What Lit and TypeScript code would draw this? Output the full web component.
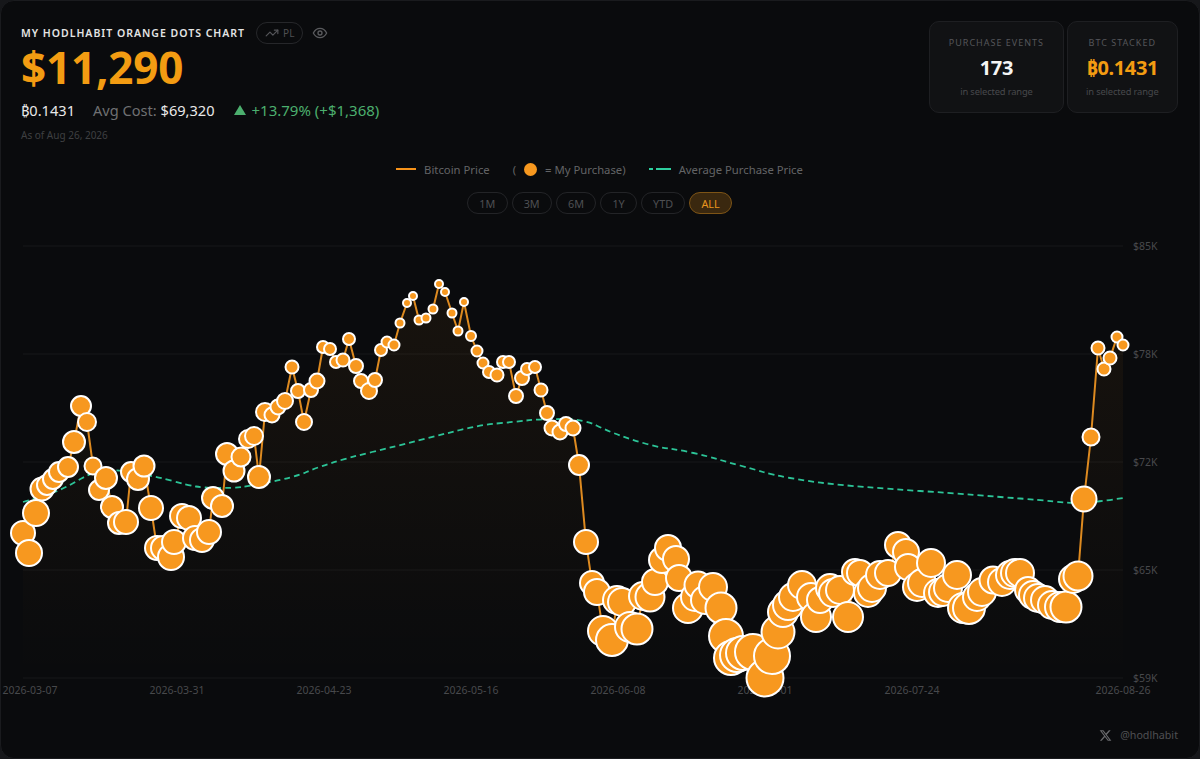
import { LitElement, html, css, svg } from "lit";
import { customElement } from "lit/decorators.js";

// x, y, outer radius of each purchase
const dots: number[][] = [
  [23,533,13],[29,553,14],[36,513,14],[42,489,12.5],[47,485,11],[53,479,11],[59,472,11],[68,467,11],
  [74,442,12],[81,406,11],[87,422,10],[93,466,9.5],[99,490,11],[106,478,12],[112,507,12],[119,523,12],
  [126,522,13],[131,472,11],[138,479,12],[144,466,11.5],[151,508,13],[157,548,13],[163,548,13],[171,557,14],
  [174,542,13],[182,516,13],[189,518,13],[195,538,13],[202,540,13],[209,532,13],[213,498,12],[222,506,12],
  [227,454,12],[234,471,11.5],[241,457,10.5],[248,439,10],[254,436,10],[259,477,12],[265,412,10],[272,415,8.5],
  [278,407,8.5],[285,401,9],[292,367,7.5],[298,391,8],[304,422,9],[311,390,8],[317,381,8.5],[323,347,7],
  [330,349,7],[336,362,7],[343,360,7.5],[349,339,7],[356,366,8],[361,381,8],[369,391,9],[375,380,8],
  [381,350,7],[387,342,6.5],[394,345,6.5],[400,323,5.5],[407,303,5],[413,296,5],[419,320,5.5],[426,318,5.5],
  [433,309,5.5],[439,284,5],[445,292,5],[452,313,5.5],[458,331,5.5],[464,302,5],[471,336,6],[477,351,6.5],
  [483,363,6.5],[489,372,7],[497,375,7.5],[503,362,7],[509,362,7],[516,396,8],[522,378,8],[527,369,7],
  [535,367,7],[541,390,7.5],[547,413,8],[552,428,8.5],[560,432,8.5],[566,424,8],[573,428,8.5],[579,465,11],
  [586,542,13],[592,583,13],[597,592,14],[603,631,16],[612,640,17],[617,600,15],[622,602,15],[630,627,16],
  [637,629,16.5],[643,596,15],[650,597,15.5],[655,582,14],[662,560,14],[668,548,14],[676,559,14],[679,578,14],
  [688,608,16],[695,597,15],[698,585,14.5],[705,600,15],[713,587,15],[721,608,16.5],[726,636,18],[731,658,18],
  [737,655,18],[743,653,18],[753,652,19],[765,678,19.5],[772,656,19],[778,632,17.5],[783,612,16],[788,605,16],
  [793,597,15],[802,585,15],[811,597,15],[816,617,16],[820,600,14],[830,588,15],[833,593,15],[840,590,15],
  [848,617,16],[855,572,14],[860,573,14],[868,593,15],[872,588,15],[880,575,15],[888,573,14],[898,545,14],
  [906,552,14],[908,567,14],[917,587,15],[922,583,15],[931,563,15],[938,593,15],[943,592,15],[948,588,15],
  [957,575,15],[963,608,16],[969,608,17],[977,597,15],[982,592,15],[993,580,14.5],[1002,582,15],[1010,575,15],
  [1015,573,15],[1020,573,15],[1028,590,14],[1033,595,15],[1038,598,15],[1045,600,15],[1052,605,15],[1060,607,16],
  [1066,607,16.5],[1073,579,15],[1078,576,15.5],[1084,499,13.5],[1091,437,9.5],[1098,348,7.5],[1104,369,7.5],
  [1110,358,7.5],[1117,337,6.5],[1123,345,6.5],
];

const avg: number[][] = [
  [23,502],[45,496],[67,487],[87,475],[103,470],[118,470],[140,474],[158,477],[187,485],[205,488],[233,488],[250,486],
  [280,480],[300,475],[313,469],[347,458],[397,446],[440,435],[480,425],[513,422],[540,419],[583,419],[610,432],
  [633,440],[657,447],[680,450],[707,456],[727,462],[753,469],[773,475],[807,481],[840,485],[890,489],[950,493],
  [1000,497],[1040,500],[1067,503],[1085,503],[1103,501],[1123,498],
];

const gridY = [
  { y: 246, label: "$85K" },
  { y: 354, label: "$78K" },
  { y: 462, label: "$72K" },
  { y: 570, label: "$65K" },
  { y: 678, label: "$59K" },
];

const dates = [
  { x: 30, label: "2026-03-07" },
  { x: 177, label: "2026-03-31" },
  { x: 324, label: "2026-04-23" },
  { x: 471, label: "2026-05-16" },
  { x: 618, label: "2026-06-08" },
  { x: 765, label: "2026-07-01" },
  { x: 912, label: "2026-07-24" },
  { x: 1123, label: "2026-08-26" },
];

const ranges = ["1M", "3M", "6M", "1Y", "YTD", "ALL"];

const pts = (list: number[][]) => list.map((p) => `${p[0]},${p[1]}`).join(" ");

// rounds the corners of the average line through the midpoints
const smooth = (list: number[][]) => {
  let d = `M${list[0][0]},${list[0][1]}`;
  for (let i = 1; i < list.length - 1; i++) {
    const mx = (list[i][0] + list[i + 1][0]) / 2;
    const my = (list[i][1] + list[i + 1][1]) / 2;
    d += ` Q${list[i][0]},${list[i][1]} ${mx},${my}`;
  }
  const last = list[list.length - 1];
  return `${d} L${last[0]},${last[1]}`;
};

@customElement("app-root")
export class AppRoot extends LitElement {
  static styles = css`
    :host {
      display: block;
      width: 1200px;
      height: 759px;
      background: #16171a;
      font-family: "Noto Sans", "Open Sans", sans-serif;
      overflow: hidden;
    }
    .card {
      box-sizing: border-box;
      height: 759px;
      padding: 20px 21px 0 20px;
      background: #0a0b0d;
      border: 1px solid #1a1b1e;
      border-radius: 14px;
      display: flex;
      flex-direction: column;
    }
    .header {
      display: flex;
      justify-content: space-between;
      align-items: flex-start;
      height: 118px;
    }
    .title-row {
      display: flex;
      align-items: center;
      height: 24px;
    }
    .title {
      font-size: 10.5px;
      font-weight: 600;
      letter-spacing: 1px;
      color: #e4e4e4;
    }
    .pill {
      display: flex;
      align-items: center;
      gap: 4px;
      margin-left: 11px;
      height: 20px;
      padding: 0 8px;
      border: 1px solid #26272a;
      border-radius: 11px;
      font-size: 10px;
      color: #4f5052;
    }
    .eye {
      margin-left: 9px;
      display: block;
    }
    .amount {
      font-size: 44px;
      font-weight: 700;
      line-height: 44px;
      color: #f39c12;
      letter-spacing: -0.2px;
    }
    .stats {
      display: flex;
      align-items: center;
      font-size: 14.6px;
      line-height: 20px;
      margin-top: 11px;
      color: #e8e8e8;
    }
    .muted {
      color: #6f7072;
      margin-left: 18px;
    }
    .value {
      color: #e8e8e8;
    }
    .up {
      color: #4caf6e;
      font-size: 15px;
      margin-left: 19px;
      display: flex;
      align-items: center;
      gap: 6px;
    }
    .as-of {
      font-size: 10px;
      color: #3f4042;
      margin-top: 8px;
    }
    .boxes {
      display: flex;
      gap: 3px;
    }
    .box {
      box-sizing: border-box;
      height: 92px;
      padding: 0 18.5px;
      background: #111214;
      border: 1px solid #1e1f22;
      border-radius: 10px;
      display: flex;
      flex-direction: column;
      align-items: center;
      justify-content: center;
    }
    .box-label {
      font-size: 9px;
      letter-spacing: 1px;
      color: #55565a;
    }
    .box-value {
      font-size: 20px;
      font-weight: 700;
      line-height: 28px;
      margin: 5px 0 3px;
      letter-spacing: -0.4px;
      color: #f4f4f4;
    }
    .box-value.orange {
      color: #f39c12;
    }
    .box-sub {
      font-size: 9.35px;
      letter-spacing: -0.15px;
      color: #48494c;
    }
    .legend {
      display: flex;
      justify-content: center;
      align-items: center;
      gap: 23px;
      font-size: 11.3px;
      color: #636466;
      height: 20px;
      margin-top: 20px;
    }
    .legend-item {
      display: flex;
      align-items: center;
      gap: 8px;
    }
    .swatch {
      width: 20px;
      height: 2px;
      background: #f7931a;
    }
    .purchase-dot {
      width: 13px;
      height: 13px;
      border-radius: 50%;
      background: #f7981f;
    }
    .ranges {
      display: flex;
      justify-content: center;
      gap: 4px;
      margin-top: 13px;
    }
    .range {
      height: 22px;
      box-sizing: border-box;
      padding: 0 11.2px;
      display: flex;
      align-items: center;
      border: 1px solid #232427;
      border-radius: 11px;
      font-size: 10.8px;
      color: #4f5053;
    }
    .range.active {
      background: #3a280f;
      border-color: #7d5416;
      color: #e8961e;
    }
    .spacer {
      height: 16px;
    }
    svg.chart {
      display: block;
      margin: 0 -21px 0 -21px;
      flex: none;
    }
    .grid {
      stroke: #17181b;
      stroke-width: 1;
    }
    .axis {
      font-size: 10.5px;
      fill: #48494c;
    }
    .footer {
      display: flex;
      justify-content: flex-end;
      align-items: center;
      gap: 8px;
      font-size: 10.7px;
      color: #4f5053;
      margin-top: 24px;
    }
  `;

  chart() {
    const area = `23,678 ${pts(dots)} 1123,678`;
    return html`
      <svg class="chart" width="1200" height="474" viewBox="0 230 1200 474">
        <defs>
          <linearGradient id="areaFill" x1="0" y1="280" x2="0" y2="678" gradientUnits="userSpaceOnUse">
            <stop offset="0" stop-color="#f7931a" stop-opacity="0.06"></stop>
            <stop offset="1" stop-color="#f7931a" stop-opacity="0"></stop>
          </linearGradient>
        </defs>
        ${gridY.map(
          (g) => svg`
            <line class="grid" x1="23" x2="1123" y1=${g.y} y2=${g.y}></line>
            <text class="axis" x="1133" y=${g.y + 4}>${g.label}</text>
          `
        )}
        ${dates.map((d) => svg`<text class="axis" x=${d.x} y="694" text-anchor="middle">${d.label}</text>`)}
        <polygon points=${area} fill="url(#areaFill)"></polygon>
        <path d=${smooth(avg)} fill="none" stroke="#2cc497" stroke-width="1.8" stroke-dasharray="6 4"></path>
        <polyline points=${pts(dots)} fill="none" stroke="#dd8a20" stroke-width="2"></polyline>
        ${dots.map(
          (d) => svg`<circle cx=${d[0]} cy=${d[1]} r=${d[2] - 1} fill="#f7981f" stroke="#fff" stroke-width="2"></circle>`
        )}
      </svg>
    `;
  }

  render() {
    return html`
      <div class="card">
        <div class="header">
          <div>
            <div class="title-row">
              <span class="title">MY HODLHABIT ORANGE DOTS CHART</span>
              <span class="pill">
                <svg width="14" height="14" viewBox="0 0 24 24" fill="none" stroke="#55565a" stroke-width="2" stroke-linecap="round" stroke-linejoin="round">
                  <polyline points="22 7 13.5 15.5 8.5 10.5 2 17"></polyline>
                  <polyline points="16 7 22 7 22 13"></polyline>
                </svg>
                PL
              </span>
              <svg class="eye" width="16" height="16" viewBox="0 0 24 24" fill="none" stroke="#5a5b5e" stroke-width="2" stroke-linecap="round" stroke-linejoin="round">
                <path d="M2 12s3.6-7 10-7 10 7 10 7-3.6 7-10 7-10-7-10-7z"></path>
                <circle cx="12" cy="12" r="3"></circle>
              </svg>
            </div>
            <div class="amount">$11,290</div>
            <div class="stats">
              <span>₿0.1431</span>
              <span class="muted">Avg Cost: <span class="value">$69,320</span></span>
              <span class="up">
                <svg width="12" height="10" viewBox="0 0 12 10"><polygon points="6,0 12,10 0,10" fill="#4caf6e"></polygon></svg>
                +13.79% (+$1,368)
              </span>
            </div>
            <div class="as-of">As of Aug 26, 2026</div>
          </div>
          <div class="boxes">
            <div class="box">
              <span class="box-label">PURCHASE EVENTS</span>
              <span class="box-value">173</span>
              <span class="box-sub">in selected range</span>
            </div>
            <div class="box">
              <span class="box-label">BTC STACKED</span>
              <span class="box-value orange">₿0.1431</span>
              <span class="box-sub">in selected range</span>
            </div>
          </div>
        </div>
        <div class="legend">
          <div class="legend-item"><span class="swatch"></span>Bitcoin Price</div>
          <div class="legend-item">( <span class="purchase-dot"></span> = My Purchase)</div>
          <div class="legend-item">
            <svg width="22" height="2" viewBox="0 0 22 2"><line x1="0" x2="22" y1="1" y2="1" stroke="#2ecf9f" stroke-width="2" stroke-dasharray="4 3 15 0"></line></svg>
            Average Purchase Price
          </div>
        </div>
        <div class="ranges">
          ${ranges.map((r) => html`<span class="range ${r === "ALL" ? "active" : ""}">${r}</span>`)}
        </div>
        <div class="spacer"></div>
        ${this.chart()}
        <div class="footer">
          <svg width="13" height="13" viewBox="0 0 24 24" fill="#6a6b6e">
            <path d="M18.24 2.25h3.31l-7.23 8.26 8.5 11.24H16.17l-5.21-6.82-5.97 6.82H1.68l7.73-8.84L1.25 2.25H8.08l4.71 6.23zm-1.16 17.52h1.83L7.08 4.13H5.12z"></path>
          </svg>
          @hodlhabit
        </div>
      </div>
    `;
  }
}
